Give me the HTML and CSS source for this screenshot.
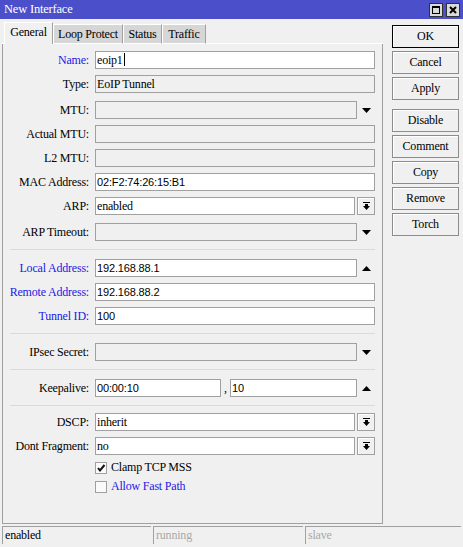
FILE: index.html
```html
<!DOCTYPE html>
<html>
<head>
<meta charset="utf-8">
<title>New Interface</title>
<link rel="stylesheet" href="styles.css">
</head>
<body>
<div class="titlebar">
  <span class="title">New Interface</span>
  <div class="tb-buttons">
    <span class="tb-btn"><svg width="10" height="10" viewBox="0 0 10 10"><rect x="1.5" y="1.5" width="7" height="7" fill="none" stroke="#000" stroke-width="1"/><rect x="1" y="1" width="8" height="2" fill="#000"/></svg></span>
    <span class="tb-btn"><svg width="10" height="10" viewBox="0 0 10 10"><path d="M2 2 L8 8 M8 2 L2 8" stroke="#000" stroke-width="2"/></svg></span>
  </div>
</div>
<div class="main">
  <div class="left">
    <div class="tabs">
      <div class="tab-pad"></div>
      <div class="tab active w-general">General</div>
      <div class="tab w-loop">Loop Protect</div>
      <div class="tab w-status">Status</div>
      <div class="tab w-traffic">Traffic</div>
      <div class="tab-fill"></div>
    </div>
    <div class="panel">
      <div class="row">
        <div class="lbl blue">Name:</div>
        <div class="ctl"><div class="field">eoip1<span class="caret"></span></div></div>
      </div>
      <div class="row">
        <div class="lbl">Type:</div>
        <div class="ctl"><div class="field ro">EoIP Tunnel</div></div>
      </div>
      <div class="row up2">
        <div class="lbl">MTU:</div>
        <div class="ctl"><div class="field ro"></div><span class="arrow"><svg width="9" height="5" viewBox="0 0 9 5"><polygon points="0,0 9,0 4.5,5" fill="#000"/></svg></span></div>
      </div>
      <div class="row">
        <div class="lbl">Actual MTU:</div>
        <div class="ctl"><div class="field ro"></div></div>
      </div>
      <div class="row">
        <div class="lbl">L2 MTU:</div>
        <div class="ctl"><div class="field ro"></div></div>
      </div>
      <div class="row">
        <div class="lbl">MAC Address:</div>
        <div class="ctl"><div class="field num">02:F2:74:26:15:B1</div></div>
      </div>
      <div class="row">
        <div class="lbl">ARP:</div>
        <div class="ctl"><div class="field">enabled</div><span class="dd"><svg width="7" height="8" viewBox="0 0 7 8"><rect x="0" y="0" width="7" height="1" fill="#000"/><rect x="2" y="2" width="3" height="2" fill="#000"/><polygon points="0,4 7,4 3.5,8" fill="#000"/></svg></span></div>
      </div>
      <div class="row up2">
        <div class="lbl">ARP Timeout:</div>
        <div class="ctl"><div class="field ro"></div><span class="arrow"><svg width="9" height="5" viewBox="0 0 9 5"><polygon points="0,0 9,0 4.5,5" fill="#000"/></svg></span></div>
      </div>
      <div class="sep"></div>
      <div class="row">
        <div class="lbl blue">Local Address:</div>
        <div class="ctl"><div class="field num">192.168.88.1</div><span class="arrow"><svg width="9" height="5" viewBox="0 0 9 5"><polygon points="0,5 9,5 4.5,0" fill="#000"/></svg></span></div>
      </div>
      <div class="row">
        <div class="lbl blue">Remote Address:</div>
        <div class="ctl"><div class="field num">192.168.88.2</div></div>
      </div>
      <div class="row">
        <div class="lbl blue">Tunnel ID:</div>
        <div class="ctl"><div class="field num">100</div></div>
      </div>
      <div class="sep"></div>
      <div class="row">
        <div class="lbl">IPsec Secret:</div>
        <div class="ctl"><div class="field ro"></div><span class="arrow"><svg width="9" height="5" viewBox="0 0 9 5"><polygon points="0,0 9,0 4.5,5" fill="#000"/></svg></span></div>
      </div>
      <div class="sep"></div>
      <div class="row">
        <div class="lbl">Keepalive:</div>
        <div class="ctl"><div class="field num ka1">00:00:10</div><span class="comma">,</span><div class="field num">10</div><span class="arrow"><svg width="9" height="5" viewBox="0 0 9 5"><polygon points="0,5 9,5 4.5,0" fill="#000"/></svg></span></div>
      </div>
      <div class="sep"></div>
      <div class="row dn2">
        <div class="lbl">DSCP:</div>
        <div class="ctl"><div class="field">inherit</div><span class="dd"><svg width="7" height="8" viewBox="0 0 7 8"><rect x="0" y="0" width="7" height="1" fill="#000"/><rect x="2" y="2" width="3" height="2" fill="#000"/><polygon points="0,4 7,4 3.5,8" fill="#000"/></svg></span></div>
      </div>
      <div class="row">
        <div class="lbl">Dont Fragment:</div>
        <div class="ctl"><div class="field">no</div><span class="dd"><svg width="7" height="8" viewBox="0 0 7 8"><rect x="0" y="0" width="7" height="1" fill="#000"/><rect x="2" y="2" width="3" height="2" fill="#000"/><polygon points="0,4 7,4 3.5,8" fill="#000"/></svg></span></div>
      </div>
      <div class="chk-row">
        <span class="box"><svg width="10" height="10" viewBox="0 0 10 10"><path d="M2 5 L4 7.5 L8.5 2" fill="none" stroke="#111" stroke-width="2"/></svg></span>
        <span>Clamp TCP MSS</span>
      </div>
      <div class="chk-row">
        <span class="box"></span>
        <span class="blue">Allow Fast Path</span>
      </div>
    </div>
  </div>
  <div class="buttons">
    <div class="btn default">OK</div>
    <div class="btn">Cancel</div>
    <div class="btn gap">Apply</div>
    <div class="btn">Disable</div>
    <div class="btn">Comment</div>
    <div class="btn">Copy</div>
    <div class="btn">Remove</div>
    <div class="btn">Torch</div>
  </div>
</div>
<div class="statusbar">
  <div class="seg">enabled</div>
  <div class="seg dim">running</div>
  <div class="seg dim">slave</div>
</div>
</body>
</html>
```
FILE: styles.css
```css
* { box-sizing: border-box; }
html, body { margin: 0; padding: 0; }
body {
  width: 463px;
  height: 547px;
  background: #f0f0f0;
  font-family: "Liberation Serif", serif;
  font-size: 12px;
  letter-spacing: -0.2px;
  color: #000;
  overflow: hidden;
}
.titlebar {
  height: 19px;
  background: #4b4fc9;
  display: flex;
  align-items: center;
  justify-content: space-between;
  padding: 0 3px 0 4px;
}
.title { color: #fff; font-size: 12.5px; }
.tb-buttons { display: flex; gap: 3px; }
.tb-btn {
  width: 14px;
  height: 14px;
  background: #dadada;
  border: 1px solid #303030;
  display: flex;
  align-items: center;
  justify-content: center;
}
.main { display: flex; height: 505px; padding-left: 2px; }
.left { width: 381px; display: flex; flex-direction: column; }
.tabs { height: 25px; display: flex; align-items: flex-end; }
.tab-pad { width: 2px; border-bottom: 1px solid #fff; }
.tab-fill { flex: 1; border-bottom: 1px solid #fff; }
.tab {
  height: 20px;
  background: #d6d6d6;
  border-top: 1px solid #fff;
  border-left: 1px solid #fff;
  border-right: 1px solid #a0a0a0;
  border-bottom: 1px solid #fff;
  text-align: center;
  line-height: 18px;
  white-space: nowrap;
}
.tab.active {
  height: 22px;
  background: #f0f0f0;
  border-bottom: none;
  line-height: 19px;
}
.w-general { width: 49px; }
.w-loop { width: 70px; }
.w-status { width: 39px; }
.w-traffic { width: 44px; }
.panel {
  flex: 1;
  border-left: 1px solid #a0a0a0;
  border-right: 1px solid #a0a0a0;
  border-bottom: 1px solid #a0a0a0;
  padding-top: 4px;
}
.row { display: flex; align-items: center; height: 24px; }
.row.up2 { margin-top: 2px; }
.row.dn2 { margin-top: -2px; }
.lbl { width: 86px; text-align: right; white-space: nowrap; }
.blue { color: #1a1ae6; }
.ctl { width: 280px; margin-left: 6px; display: flex; align-items: center; }
.field {
  flex: 1;
  height: 18px;
  border: 1px solid #a0a0a0;
  background: #fff;
  padding-left: 1px;
  line-height: 16px;
  white-space: nowrap;
  overflow: hidden;
}
.field.ro { background: #f0f0f0; }
.num { font-family: "Liberation Sans", sans-serif; font-size: 11px; letter-spacing: -0.15px; }
.ka1 { flex: 0 0 126px; }
.comma { width: 9px; text-align: center; font-size: 12px; }
.caret {
  display: inline-block;
  width: 1px;
  height: 13px;
  background: #000;
  vertical-align: -2px;
  margin-left: 1px;
}
.arrow { width: 18px; display: flex; justify-content: center; align-items: center; }
.dd {
  width: 18px;
  height: 18px;
  margin-left: 2px;
  border: 1px solid #a0a0a0;
  background: #f0f0f0;
  box-shadow: inset 1px 1px #fff;
  display: flex;
  justify-content: center;
  align-items: center;
}
.sep { height: 1px; background: #dadada; margin: 5px 7px 6px 7px; }
.chk-row { display: flex; align-items: center; height: 19px; padding-left: 92px; }
.box {
  width: 12px;
  height: 12px;
  border: 1px solid #a0a0a0;
  background: #fafafa;
  margin-right: 4px;
  display: flex;
  align-items: center;
  justify-content: center;
}
.buttons {
  margin-left: 9px;
  width: 67px;
  padding-top: 6px;
  display: flex;
  flex-direction: column;
}
.btn {
  height: 23px;
  border: 1px solid #8c8c8c;
  margin-bottom: 3px;
  text-align: center;
  line-height: 21px;
  box-shadow: inset 1px 1px #fff;
}
.btn.default { border-color: #000; }
.btn.gap { margin-bottom: 9px; }
.statusbar {
  display: grid;
  grid-template-columns: 149px 150px 156px;
  gap: 2px;
  padding-left: 2px;
  margin-top: 2px;
  height: 18px;
}
.seg {
  border-top: 1px solid #a0a0a0;
  border-left: 1px solid #a0a0a0;
  padding-left: 2px;
  line-height: 16px;
  white-space: nowrap;
}
.seg.dim { color: #a8a8a8; }
```
